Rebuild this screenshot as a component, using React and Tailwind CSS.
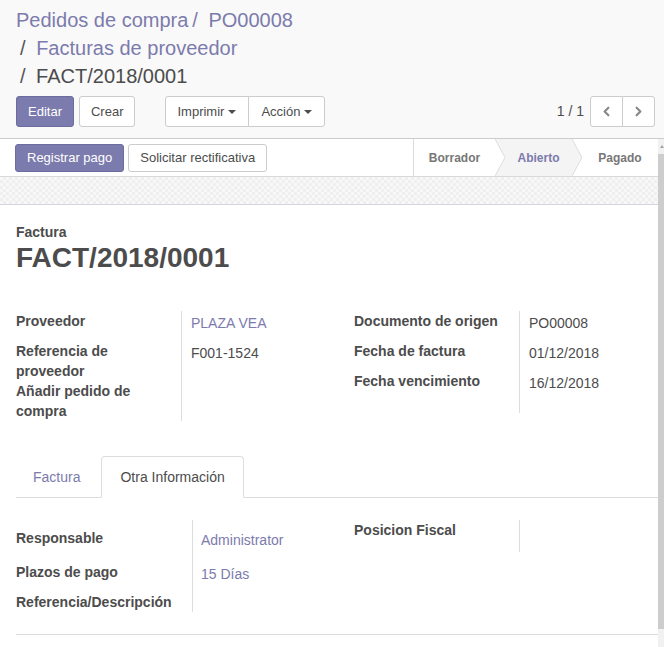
import React from "react";
import { ChevronLeft, ChevronRight } from "lucide-react";

const Caret = () => (
  <span className="ml-[4px] inline-block w-0 h-0 border-x-4 border-t-4 border-x-transparent border-t-[#4c4c4c]" />
);

const Chevron = ({ fillRight }) => (
  <svg width="10" height="37" viewBox="0 0 10 37" className="shrink-0 block">
    {fillRight ? (
      <polygon points="0,0 10,0 10,37 0,37 10,18.5" fill="#f4f4f4" />
    ) : (
      <polygon points="0,0 10,18.5 0,37" fill="#f4f4f4" />
    )}
    <polyline points="0,0 10,18.5 0,37" fill="none" stroke="#dcdcdc" strokeWidth="1" />
  </svg>
);

export default function App() {
  return (
    <div className="w-[664px] h-[647px] overflow-hidden flex flex-col bg-white font-['Liberation_Sans',Arial,sans-serif] text-[#4c4c4c]">
      {/* control panel */}
      <div className="bg-[#f9f9f9] border-b border-[#cccccc] pl-4 pr-[9px] pt-[6px] pb-[11px]">
        <div className="flex flex-wrap w-[300px] text-[20px] leading-[28px]">
          <span className="text-[#7c7bad]">Pedidos de compra</span>
          <span className="text-[#7c7bad]">
            <span className="pl-[4px] pr-[5px]">/</span>&nbsp;PO00008
          </span>
          <span>
            <span className="pl-[4px] pr-[5px] text-[#555]">/</span>&nbsp;
            <span className="text-[#7c7bad]">Facturas de proveedor</span>
          </span>
          <span>
            <span className="pl-[4px] pr-[5px] text-[#555]">/</span>&nbsp;FACT/2018/0001
          </span>
        </div>
        <div className="mt-[6px] flex items-center text-[13px]">
          <button className="h-[31px] px-[11px] rounded-[3px] border border-[#6d6c9e] bg-[#7c7bad] text-white">
            Editar
          </button>
          <button className="ml-[5px] h-[31px] px-[11px] rounded-[3px] border border-[#cccccc] bg-white">
            Crear
          </button>
          <div className="ml-[30px] flex">
            <button className="h-[31px] pl-[11px] pr-[12px] flex items-center rounded-l-[3px] border border-[#cccccc] bg-white">
              Imprimir
              <Caret />
            </button>
            <button className="-ml-px h-[31px] pl-[12px] pr-[12px] flex items-center rounded-r-[3px] border border-[#cccccc] bg-white">
              Acción
              <Caret />
            </button>
          </div>
          <div className="ml-auto flex items-center">
            <span className="text-[14px] mr-[6px]">1 / 1</span>
            <button className="w-[33px] h-[31px] flex items-center justify-center rounded-l-[3px] border border-[#cccccc] bg-white text-[#888]">
              <ChevronLeft size={15} strokeWidth={3.5} />
            </button>
            <button className="-ml-px w-[33px] h-[31px] flex items-center justify-center rounded-r-[3px] border border-[#cccccc] bg-white text-[#888]">
              <ChevronRight size={15} strokeWidth={3.5} />
            </button>
          </div>
        </div>
      </div>

      <div className="flex-1 flex min-h-0">
        <div className="w-[658px] flex flex-col">
          {/* status bar */}
          <div className="h-[38px] shrink-0 border-b border-[#d9d9d9] flex items-center pl-[15px] text-[13px]">
            <button className="h-[28px] px-[11px] rounded-[3px] border border-[#6d6c9e] bg-[#7c7bad] text-white">
              Registrar pago
            </button>
            <button className="ml-[4px] h-[28px] px-[11px] rounded-[3px] border border-[#cccccc] bg-white">
              Solicitar rectificativa
            </button>
            <div className="ml-auto flex h-full border-l border-[#dcdcdc] text-[12px] font-bold text-[#777]">
              <div className="w-[81px] flex items-center justify-center">Borrador</div>
              <Chevron fillRight />
              <div className="w-[67px] flex items-center justify-center bg-[#f4f4f4] text-[#7c7bad]">Abierto</div>
              <Chevron />
              <div className="w-[76px] flex items-center justify-center">Pagado</div>
            </div>
          </div>
          <div className="h-[28px] shrink-0 border-b border-[#d5d5de] bg-[#f4f4f4] bg-[image:repeating-conic-gradient(#efefef_0%_25%,#f8f8f8_0%_50%)] bg-[length:6px_6px]" />

          {/* sheet */}
          <div className="flex-1 bg-white pl-4 pt-[17px] text-[14px] leading-[20px]">
            <div className="font-bold">Factura</div>
            <div className="text-[28px] leading-[32px] font-bold">FACT/2018/0001</div>

            <div className="mt-[37px] flex">
              <div className="w-[338px] grid grid-cols-[165px_1fr]">
                <div className="h-[30px] font-bold pr-2">Proveedor</div>
                <div className="border-l border-[#dddddd] pl-[9px] pt-[2px] text-[#7c7bad]">PLAZA VEA</div>
                <div className="min-h-[40px] font-bold pr-2">Referencia de proveedor</div>
                <div className="border-l border-[#dddddd] pl-[9px] pt-[2px]">F001-1524</div>
                <div className="min-h-[40px] font-bold pr-2">Añadir pedido de compra</div>
                <div className="border-l border-[#dddddd] pl-[9px]" />
              </div>
              <div className="flex-1 grid grid-cols-[165px_1fr] content-start">
                <div className="h-[30px] font-bold pr-2">Documento de origen</div>
                <div className="border-l border-[#dddddd] pl-[9px] pt-[2px]">PO00008</div>
                <div className="h-[30px] font-bold pr-2">Fecha de factura</div>
                <div className="border-l border-[#dddddd] pl-[9px] pt-[2px]">01/12/2018</div>
                <div className="h-[42px] font-bold pr-2">Fecha vencimiento</div>
                <div className="border-l border-[#dddddd] pl-[9px] pt-[2px]">16/12/2018</div>
              </div>
            </div>

            {/* tabs */}
            <div className="mt-[35px] flex border-b border-[#dddddd]">
              <div className="-mb-px mr-[4px] px-4 py-[10px] border border-transparent text-[#7c7bad]">Factura</div>
              <div className="-mb-px px-[18px] py-[10px] border border-[#dddddd] border-b-white rounded-t-[4px] bg-white">
                Otra Información
              </div>
            </div>

            <div className="mt-[22px] flex">
              <div className="w-[338px] grid grid-cols-[176px_1fr]">
                <div className="h-[42px] pt-[8px] font-bold">Responsable</div>
                <div className="border-l border-[#dddddd] pl-[8px] pt-[10px] text-[#7c7bad]">Administrator</div>
                <div className="h-[30px] font-bold">Plazos de pago</div>
                <div className="border-l border-[#dddddd] pl-[8px] pt-[2px] text-[#7c7bad]">15 Días</div>
                <div className="h-[20px] font-bold whitespace-nowrap">Referencia/Descripción</div>
                <div className="border-l border-[#dddddd] pl-[8px]" />
              </div>
              <div className="flex-1 grid grid-cols-[165px_1fr] content-start">
                <div className="h-[32px] font-bold">Posicion Fiscal</div>
                <div className="border-l border-[#dddddd]" />
              </div>
            </div>

            <div className="mt-[22px] border-t border-[#dddddd]" />
          </div>
        </div>

        {/* scrollbar */}
        <div className="w-[6px] flex flex-col">
          <div className="h-[15px] bg-[#f1f1f1] flex items-center justify-end">
            <svg width="4" height="4" viewBox="0 0 4 4">
              <polygon points="0,3 4,3 2,0" fill="#a3a3a3" />
            </svg>
          </div>
          <div className="flex-1 bg-[#cdcdcd]" />
          <div className="h-[18px] bg-[#f1f1f1]" />
        </div>
      </div>
    </div>
  );
}
